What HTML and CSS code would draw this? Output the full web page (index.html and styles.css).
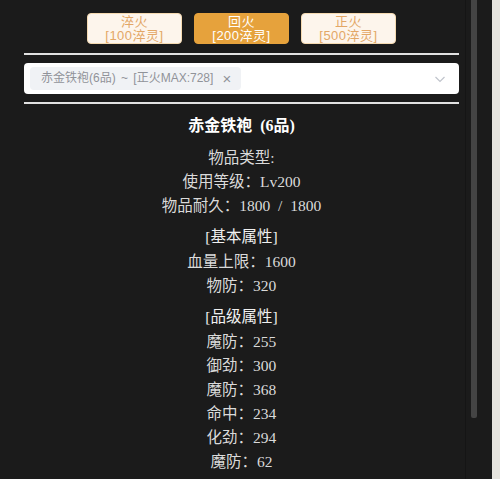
FILE: index.html
```html
<!DOCTYPE html>
<html>
<head>
  <meta charset="UTF-8">
  <title>装备淬火</title>
  <link rel="stylesheet" href="styles.css">
</head>
<body>
  <div class="panel">
    <div class="content">

      <div class="btn_group">
        <button type="button" class="btn">淬火<br>[100淬灵]</button>
        <button type="button" class="btn active">回火<br>[200淬灵]</button>
        <button type="button" class="btn">正火<br>[500淬灵]</button>
      </div>

      <div class="divider"></div>

      <div class="select">
        <span class="tag">赤金铁袍(6品) ~ [正火MAX:728]<span class="tag_close">&#215;</span></span>
        <svg class="arrow" width="12" height="12" viewBox="0 0 12 12">
          <path d="M1.5 4 L6 8.5 L10.5 4" fill="none" stroke="#c0c4cc" stroke-width="1.2"/>
        </svg>
      </div>

      <div class="divider"></div>

      <div class="info">
        <div class="title">赤金铁袍 (6品)</div>

        <div class="group">
          <div class="line">物品类型:</div>
          <div class="line">使用等级：Lv200</div>
          <div class="line">物品耐久：1800 / 1800</div>
        </div>

        <div class="group">
          <div class="head">[基本属性]</div>
          <div class="line">血量上限：1600</div>
          <div class="line">物防：320</div>
        </div>

        <div class="group">
          <div class="head">[品级属性]</div>
          <div class="line">魔防：255</div>
          <div class="line">御劲：300</div>
          <div class="line">魔防：368</div>
          <div class="line">命中：234</div>
          <div class="line">化劲：294</div>
          <div class="line">魔防：62</div>
        </div>
      </div>

    </div>
    <div class="scroll"><div class="thumb"></div></div>
  </div>
</body>
</html>
```

FILE: styles.css
```css
html, body {
  margin: 0;
  height: 100%;
  overflow: hidden;
}
/* 右侧露出的纸张底色 */
body {
  background: #e6e4de;
  font-family: "Liberation Serif", "Noto Sans CJK SC", serif;
  color: #dadada;
}

.panel {
  display: flex;
  width: 492px;
  height: 100%;
  background: #1b1b1b;
}
.content {
  width: 435px;
  padding: 13px 6px 0 24px;
  border-right: 1px solid #151515;
}
.scroll {
  width: 26px;
  padding-left: 5px;
  box-sizing: border-box;
}
  .scroll .thumb {
    width: 6px;
    height: 418px;
    background: #444;
    border-radius: 0 0 2px 2px;
  }

.btn_group {
  display: flex;
  justify-content: center;
  gap: 12px;
  margin-bottom: 9px;
}
  .btn_group .btn {
    width: 95px;
    height: 31px;
    box-sizing: border-box;
    margin: 0;
    padding: 0;
    border: 1px solid #f5dab1;
    border-radius: 4px;
    background: #fdf5ec;
    color: #e3a766;
    font: normal 13px/14px "Liberation Sans", "Noto Sans CJK SC", sans-serif;
    letter-spacing: 0.5px;
    cursor: pointer;
  }
  .btn_group .btn.active {
    background: #e6a23c;
    border-color: #e6a23c;
    color: #fff;
  }

.divider {
  height: 2px;
  background: #e2e2e2;
}

.select {
  display: flex;
  align-items: center;
  justify-content: space-between;
  height: 31px;
  margin: 8px 0;
  padding: 0 13px 0 6px;
  background: #fff;
  border-radius: 4px;
}
  .select .tag {
    display: inline-flex;
    align-items: center;
    height: 23px;
    padding: 0 10px 0 11px;
    background: #f0f2f5;
    border-radius: 4px;
    color: #909399;
    font: 12px/23px "Liberation Sans", "Noto Sans CJK SC", sans-serif;
    word-spacing: 2px;
  }
  .select .tag_close {
    margin-left: 9px;
    font-size: 15px;
  }

.info {
  padding-top: 10px;
  text-align: center;
  font-size: 15.5px;
  line-height: 24px;
  word-spacing: 4px;
}
  .info .title {
    color: #fff;
    font-size: 16px;
    font-weight: bold;
    margin-bottom: 8px;
  }
  .info .group + .group {
    margin-top: 7px;
  }
  .info .head {
    color: #f0f0f0;
    margin-bottom: 1px;
  }
```
